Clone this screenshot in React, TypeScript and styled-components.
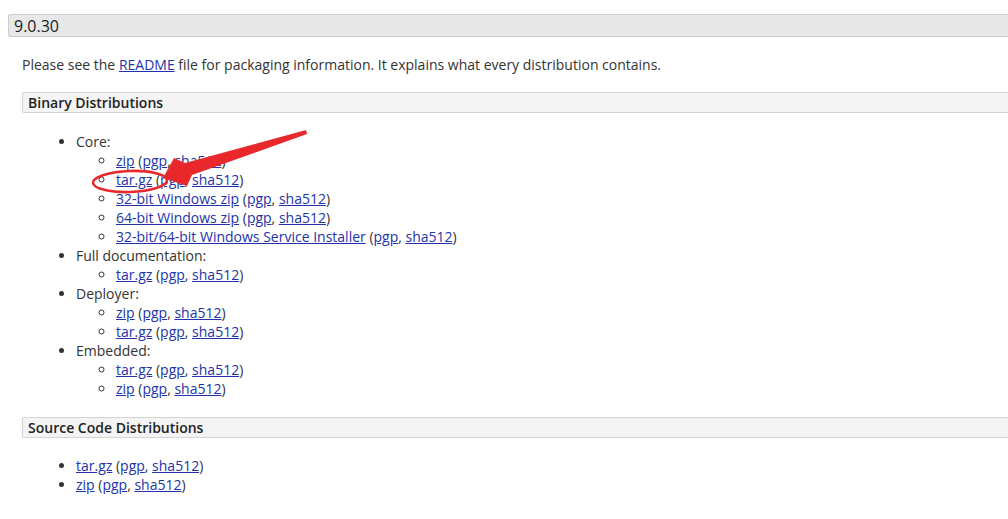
import styled, { createGlobalStyle } from 'styled-components';

const GlobalStyle = createGlobalStyle`
  body {
    margin: 0;
    background: #fff;
    font-family: 'Open Sans', 'Liberation Sans', sans-serif;
    font-size: 14px;
    color: #333;
  }
`;

const Page = styled.div`
  position: relative;
  padding: 14px 0 0 8px;
  overflow: hidden;
  height: 519px;
  box-sizing: border-box;
`;

const VersionHeader = styled.h3`
  margin: 0 -20px 0 0;
  height: 23px;
  line-height: 23px;
  padding-left: 5px;
  background: #e8e8e8;
  border: 1px solid #ccc;
  border-right: none;
  border-radius: 3px 0 0 3px;
  font-size: 16px;
  font-weight: normal;
  color: #222;
  box-sizing: border-box;
`;

const Section = styled.div`
  padding-left: 14px;
`;

const Para = styled.p`
  margin: 18px 0 0;
  line-height: 19px;
`;

const SubHeader = styled.h4<{ $top: number }>`
  margin: ${(p) => p.$top}px -20px 0 0;
  height: 21px;
  line-height: 19px;
  padding-left: 5px;
  background: #f4f4f4;
  border: 1px solid #d4d4d4;
  border-right: none;
  border-radius: 2px 0 0 2px;
  font-size: 14px;
  font-weight: 600;
  color: #222;
  box-sizing: border-box;
`;

const List = styled.ul<{ $top?: number }>`
  margin: ${(p) => p.$top ?? 0}px 0 0;
  padding-left: 54px;
  line-height: 19px;
  list-style: disc;
`;

const SubList = styled.ul`
  margin: 0;
  padding-left: 40px;
  list-style: circle;
`;

const Link = styled.a`
  color: #2233aa;
  text-decoration: underline;
`;

const Overlay = styled.svg`
  position: absolute;
  left: 0;
  top: 0;
  pointer-events: none;
`;

type Item = { name: string };

const Dl = ({ name }: Item) => (
  <li>
    <Link href="#">{name}</Link> (<Link href="#">pgp</Link>, <Link href="#">sha512</Link>)
  </li>
);

const groups: { title: string; items: string[] }[] = [
  {
    title: 'Core:',
    items: ['zip', 'tar.gz', '32-bit Windows zip', '64-bit Windows zip', '32-bit/64-bit Windows Service Installer'],
  },
  { title: 'Full documentation:', items: ['tar.gz'] },
  { title: 'Deployer:', items: ['zip', 'tar.gz'] },
  { title: 'Embedded:', items: ['tar.gz', 'zip'] },
];

const App = () => (
  <Page>
    <GlobalStyle />
    <VersionHeader>9.0.30</VersionHeader>
    <Section>
      <Para>
        Please see the <Link href="#">README</Link> file for packaging information. It explains what every
        distribution contains.
      </Para>
      <SubHeader $top={18}>Binary Distributions</SubHeader>
      <List $top={19}>
        {groups.map((g) => (
          <li key={g.title}>
            {g.title}
            <SubList>
              {g.items.map((it, i) => (
                <Dl key={i} name={it} />
              ))}
            </SubList>
          </li>
        ))}
      </List>
      <SubHeader $top={19}>Source Code Distributions</SubHeader>
      <List $top={18}>
        <Dl name="tar.gz" />
        <Dl name="zip" />
      </List>
    </Section>
    <Overlay width="1008" height="519">
      <ellipse cx="130" cy="181.5" rx="37" ry="10.5" fill="none" stroke="#e8282a" strokeWidth="2.6" transform="rotate(-2 130 181.5)" />
      <polygon points="306,130 185,163 174,158 163,178 187,186 192,175 307,134" fill="#e8282a" />
    </Overlay>
  </Page>
);

export default App;
